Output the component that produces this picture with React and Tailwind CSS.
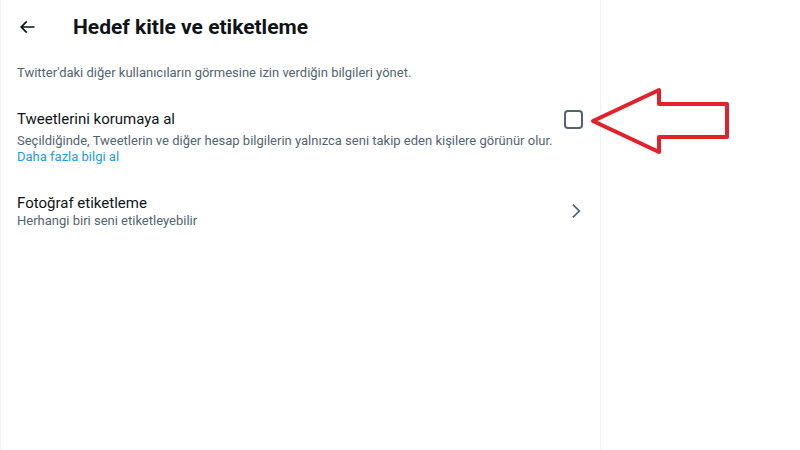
import React from 'react';

function BackIcon() {
  return (
    <svg viewBox="0 0 24 24" className="w-5 h-5 fill-[#0f1419]">
      <path d="M7.414 13l5.043 5.04-1.414 1.42L3.586 12l7.457-7.46 1.414 1.42L7.414 11H21v2H7.414z" />
    </svg>
  );
}

function ChevronIcon() {
  return (
    <svg viewBox="0 0 24 24" className="w-5 h-5 fill-[#536471]">
      <path d="M14.586 12L7.543 4.96l1.414-1.42L17.414 12l-8.457 8.46-1.414-1.42L14.586 12z" />
    </svg>
  );
}

export default function App() {
  return (
    <div className="w-[800px] h-[450px] bg-white flex font-['Roboto',sans-serif] overflow-hidden relative">
      <div className="w-[601px] h-full border-l border-r border-[#eff3f4] flex flex-col">
        {/* Cabecera */}
        <div className="h-[53px] flex items-center px-4">
          <div className="w-[56px] flex items-center">
            <BackIcon />
          </div>
          <h2 className="text-[21px] font-bold text-[#0f1419] leading-6">Hedef kitle ve etiketleme</h2>
        </div>

        <p className="px-4 pt-[12px] pb-[11px] text-[13px] text-[#536471] leading-4">
          Twitter'daki diğer kullanıcıların görmesine izin verdiğin bilgileri yönet.
        </p>

        {/* Tweet koruma */}
        <div className="px-4 pt-[17px] pb-3 flex items-start justify-between">
          <div>
            <p className="text-[15px] text-[#0f1419] leading-5">Tweetlerini korumaya al</p>
            <p className="text-[13px] text-[#536471] leading-4 mt-[4px]">
              Seçildiğinde, Tweetlerin ve diğer hesap bilgilerin yalnızca seni takip eden kişilere görünür olur.
            </p>
            <p className="text-[13px] text-[#1d9bf0] leading-4">Daha fazla bilgi al</p>
          </div>
          <div className="w-[19px] h-[19px] border-2 border-[#536471] rounded-[4px] mt-[1px] mr-[1px] shrink-0" />
        </div>

        {/* Fotoğraf etiketleme */}
        <div className="px-4 pt-[16px] pb-3 flex items-center justify-between">
          <div>
            <p className="text-[15px] text-[#0f1419] leading-5">Fotoğraf etiketleme</p>
            <p className="text-[13px] text-[#536471] leading-4">Herhangi biri seni etiketleyebilir</p>
          </div>
          <div className="mr-[-2px]">
            <ChevronIcon />
          </div>
        </div>
      </div>

      {/* Kırmızı ok */}
      <svg className="absolute left-0 top-0" width="800" height="450">
        <polygon
          points="593,121 659,90 659,104 727,104 727,137 659,137 659,152"
          fill="none"
          stroke="#e4202a"
          strokeWidth="4"
          strokeLinejoin="round"
        />
      </svg>
    </div>
  );
}
